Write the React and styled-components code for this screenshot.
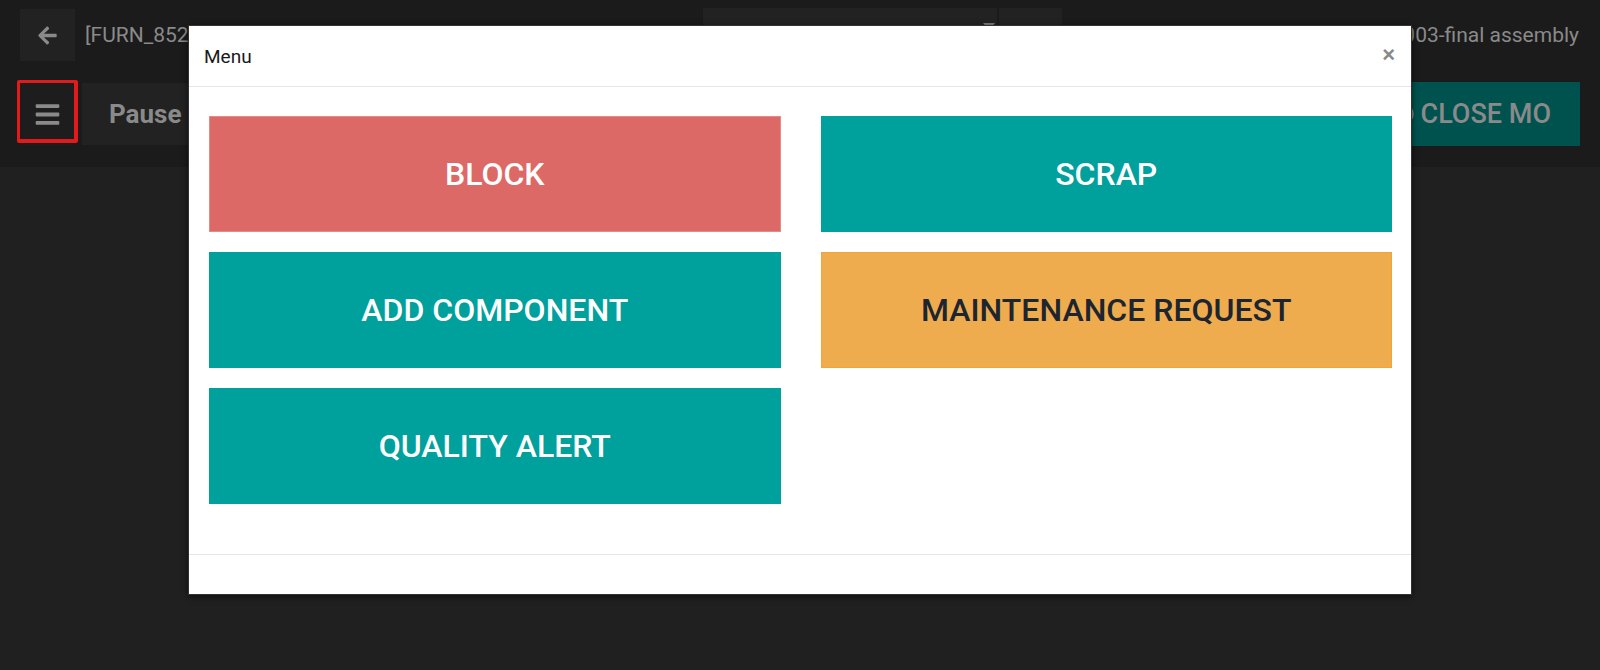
import React from 'react';
import styled, { createGlobalStyle } from 'styled-components';
import { FaArrowLeft, FaBars, FaPowerOff } from 'react-icons/fa';

const GlobalStyle = createGlobalStyle`
  html, body {
    margin: 0;
    padding: 0;
    background: #202020;
    font-family: Roboto, "Liberation Sans", sans-serif;
  }
  * {
    box-sizing: border-box;
  }
`;

const Page = styled.div`
  position: relative;
  width: 1600px;
  height: 670px;
  overflow: hidden;
  background: #202020;
`;

const TopBar = styled.header`
  display: flex;
  flex-direction: column;
  gap: 21px;
  height: 167px;
  padding-top: 9px;
  background: #1b1b1b;
`;

const InfoRow = styled.div`
  display: flex;
  align-items: center;
  height: 52px;
`;

const LeftGroup = styled.div`
  display: flex;
  align-items: center;
  flex: 0 0 703px;
  padding-left: 20px;
  gap: 10px;
`;

const IconButton = styled.button`
  position: relative;
  display: flex;
  align-items: center;
  justify-content: center;
  width: 55px;
  height: ${(props) => props.h || 52}px;
  border: none;
  padding: 0;
  color: #8a8a8a;
  background: ${(props) => props.bg || '#222'};
`;

const Annotation = styled.span`
  position: absolute;
  top: -3px;
  left: -3px;
  width: 61px;
  height: 63px;
  border: 3px solid #e11b1b;
  border-right-width: 4px;
  border-bottom-width: 4px;
  border-radius: 2px;
`;

const Title = styled.div`
  font-size: 21px;
  color: #8a8a8a;
  white-space: nowrap;
`;

const CenterGroup = styled.div`
  display: flex;
  align-self: flex-start;
  gap: 2px;
  height: 40px;
  margin-top: -1px;
`;

const Field = styled.div`
  position: relative;
  width: 294px;
  background: #222;
`;

const Caret = styled.span`
  position: absolute;
  right: 2px;
  top: 15px;
  width: 0;
  height: 0;
  border-left: 6px solid transparent;
  border-right: 6px solid transparent;
  border-top: 7px solid #7a7a7a;
`;

const FieldButton = styled.div`
  width: 63px;
  background: #222;
`;

const RightGroup = styled.div`
  flex: 1;
  display: flex;
  justify-content: flex-end;
  padding-right: 21px;
`;

const ActionRow = styled.div`
  display: flex;
  align-items: center;
  height: 64px;
  padding: 0 20px;
  gap: 7px;
`;

const PauseButton = styled.button`
  height: 62px;
  width: 300px;
  padding: 0 0 0 27px;
  border: none;
  text-align: left;
  font-family: Roboto, sans-serif;
  font-size: 26px;
  font-weight: 700;
  color: #8a8a8a;
  background: #222;
`;

const CloseButton = styled.button`
  display: flex;
  align-items: center;
  gap: 7px;
  height: 64px;
  margin-left: auto;
  padding: 0 29px 0 0;
  border: none;
  font-family: Roboto, sans-serif;
  font-size: 27px;
  font-weight: 500;
  color: #8a8a8a;
  background: #00524f;

  svg {
    margin-left: -12px;
  }
`;

const Modal = styled.div`
  position: absolute;
  top: 25px;
  left: 188px;
  width: 1224px;
  display: flex;
  flex-direction: column;
  background: #fff;
  border: 1px solid rgba(0, 0, 0, 0.8);
  box-shadow: 0 2px 6px rgba(0, 0, 0, 0.6);
`;

const ModalHeader = styled.div`
  display: flex;
  align-items: center;
  justify-content: space-between;
  height: 61px;
  padding: 0 16px 0 15px;
  border-bottom: 1px solid #e5e5e5;
`;

const ModalTitle = styled.h4`
  margin: 0;
  font-family: Roboto, sans-serif;
  font-size: 19px;
  font-weight: 400;
  color: #1a1a1a;
`;

const CloseX = styled.span`
  font-family: "Liberation Sans", Arial, sans-serif;
  font-size: 22px;
  font-weight: 700;
  line-height: 1;
  color: #888;
  margin-top: -2px;
`;

const ModalBody = styled.div`
  display: grid;
  grid-template-columns: 1fr 1fr;
  column-gap: 40px;
  row-gap: 20px;
  padding: 29px 19px 50px 20px;
`;

const MenuButton = styled.button`
  height: 116px;
  border: 1px solid ${(props) => props.border};
  background: ${(props) => props.bg};
  color: ${(props) => props.fg || '#fff'};
  font-family: Roboto, sans-serif;
  font-size: 32px;
  font-weight: 500;
  text-transform: uppercase;
`;

const ModalFooter = styled.div`
  height: 40px;
  border-top: 1px solid #e5e5e5;
`;

const menuItems = [
  { label: 'Block', bg: '#dd6966', border: '#e58a87' },
  { label: 'Scrap', bg: '#00a09d', border: '#00a09d' },
  { label: 'Add Component', bg: '#00a09d', border: '#00a09d' },
  { label: 'Maintenance Request', bg: '#efac4e', border: '#f0a43a', fg: '#1c2530' },
  { label: 'Quality Alert', bg: '#00a09d', border: '#00a09d' },
];

export default function App() {
  return (
    <Page>
      <GlobalStyle />
      <TopBar>
        <InfoRow>
          <LeftGroup>
            <IconButton>
              <FaArrowLeft size={21} />
            </IconButton>
            <Title>[FURN_8522] Top</Title>
          </LeftGroup>
          <CenterGroup>
            <Field>
              <Caret />
            </Field>
            <FieldButton />
          </CenterGroup>
          <RightGroup>
            <Title>003-final assembly</Title>
          </RightGroup>
        </InfoRow>
        <ActionRow>
          <IconButton h={62} bg="#1d1d1d">
            <FaBars size={27} />
            <Annotation />
          </IconButton>
          <PauseButton>Pause</PauseButton>
          <CloseButton>
            <FaPowerOff size={22} />
            CLOSE MO
          </CloseButton>
        </ActionRow>
      </TopBar>

      <Modal>
        <ModalHeader>
          <ModalTitle>Menu</ModalTitle>
          <CloseX>×</CloseX>
        </ModalHeader>
        <ModalBody>
          {menuItems.map((item) => (
            <MenuButton key={item.label} bg={item.bg} border={item.border} fg={item.fg}>
              {item.label}
            </MenuButton>
          ))}
        </ModalBody>
        <ModalFooter />
      </Modal>
    </Page>
  );
}
